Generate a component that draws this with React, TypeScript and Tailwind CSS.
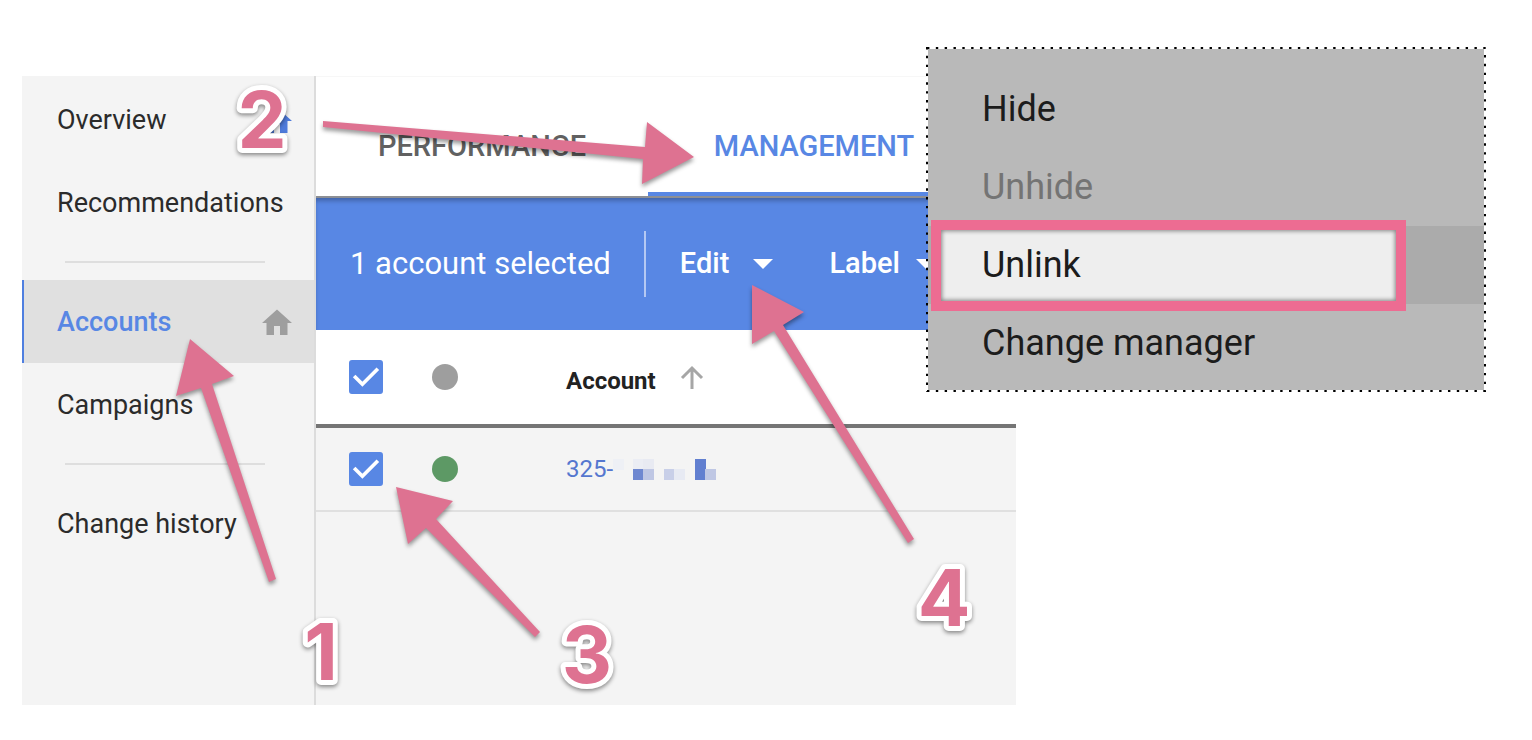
import { useState } from 'react';
import { clsx } from 'clsx';

type NavItem = { label: string; home?: string; active?: boolean };

const navGroups: NavItem[][] = [
  [{ label: 'Overview', home: 'text-[#4f7bdb]' }, { label: 'Recommendations' }],
  [{ label: 'Accounts', home: 'text-[#9e9e9e]', active: true }, { label: 'Campaigns' }],
  [{ label: 'Change history' }],
];

const menuItems = [
  { label: 'Hide' },
  { label: 'Unhide', disabled: true },
  { label: 'Unlink', highlighted: true },
  { label: 'Change manager' },
];

const arrows = [
  '190,339 234,376 212,384 276,579 269,582 201,388 176,396',
  '323,121 645,147 647,122 694,157 642,184 643,159 323,127',
  '396,487 453,501 436,519 540,632 535,637 426,528 408,544',
  '752,285 804,312 783,325 914,539 908,543 774,331 752,344',
];

const steps = [
  { label: '1', x: 321, y: 680 },
  { label: '2', x: 262, y: 148 },
  { label: '3', x: 587, y: 683 },
  { label: '4', x: 944, y: 626 },
];

// blurred digits of the account number
const redacted = [
  { x: 0, y: 0, fill: '#eef0f5' },
  { x: 20, y: 0, fill: '#ebedf4' },
  { x: 30, y: 0, fill: '#e8eaf2' },
  { x: 20, y: 10, fill: '#6f88d0' },
  { x: 30, y: 10, fill: '#bfc7e4' },
  { x: 51, y: 10, fill: '#c8cfe8' },
  { x: 61, y: 10, fill: '#e7eaf3' },
  { x: 82, y: 0, fill: '#617fd0' },
  { x: 82, y: 10, fill: '#617fd0' },
  { x: 92, y: 10, fill: '#bfc7e4' },
];

function HomeIcon({ className }: { className: string }) {
  return (
    <svg viewBox="0 0 24 24" fill="currentColor" aria-hidden="true" className={clsx('h-9 w-9', className)}>
      <path d="M10 20v-6h4v6h5v-8h3L12 3 2 12h3v8z" />
    </svg>
  );
}

function Caret() {
  return (
    <svg viewBox="0 0 20 10" fill="currentColor" aria-hidden="true" className="h-[10px] w-5">
      <path d="M0 0h20L10 10z" />
    </svg>
  );
}

function Checkbox({ label }: { label: string }) {
  const [checked, setChecked] = useState(true);

  return (
    <label className="relative ml-[33px] block h-[34px] w-[34px]">
      <input
        type="checkbox"
        aria-label={label}
        checked={checked}
        onChange={(event) => setChecked(event.target.checked)}
        className="block h-full w-full appearance-none rounded-[3px] border-2 border-[#5887e4] checked:bg-[#5887e4]"
      />
      {checked && (
        <svg viewBox="0 0 33 33" fill="none" stroke="#fff" strokeWidth="3.6" aria-hidden="true" className="pointer-events-none absolute inset-0">
          <path d="M5 15.5l8 8L28 8.5" />
        </svg>
      )}
    </label>
  );
}

function Sidebar() {
  return (
    <nav className="w-[294px] flex-shrink-0 border-r-2 border-[#dcdcdc] bg-[#f4f4f4] pt-[2px]">
      {navGroups.map((group, index) => (
        <div key={group[0].label}>
          {index > 0 && (
            <div className="flex h-9 items-center">
              <hr className="ml-[43px] w-[200px] border-t-2 border-[#dedede]" />
            </div>
          )}
          {group.map((item) => (
            <a
              key={item.label}
              href="#"
              aria-current={item.active ? 'page' : undefined}
              className={clsx(
                'flex h-[83px] items-center justify-between border-l-2 pl-[33px] pr-[19px] pt-[2px] text-[27px]',
                item.active
                  ? 'border-[#4f7fe0] bg-[#e0e0e0] font-medium text-[#5887e4]'
                  : 'border-transparent text-[#2b2b2b]',
              )}
            >
              {item.label}
              {item.home && <HomeIcon className={item.home} />}
            </a>
          ))}
        </div>
      ))}
    </nav>
  );
}

function AccountsTable() {
  return (
    <table className="w-full table-fixed text-left text-[24px]">
      <colgroup>
        <col className="w-[116px]" />
        <col className="w-[134px]" />
        <col />
      </colgroup>
      <thead>
        <tr className="h-[96px] border-b-4 border-[#757575] bg-white">
          <th className="p-0">
            <Checkbox label="Select all accounts" />
          </th>
          <th className="p-0">
            <span className="block h-[26px] w-[26px] rounded-full bg-[#9e9e9e]" />
          </th>
          <th className="p-0 font-bold text-[#222]">
            <div className="flex items-center gap-6 pt-2">
              Account
              <svg viewBox="0 0 24 24" fill="none" stroke="#a6a6a6" strokeWidth="3" aria-hidden="true" className="mb-2 h-6 w-6">
                <path d="M12 24V3M2 13L12 3l10 10" />
              </svg>
            </div>
          </th>
        </tr>
      </thead>
      <tbody>
        <tr className="h-[85px] border-b-2 border-[#e0e0e0]">
          <td className="p-0">
            <Checkbox label="Select account 325" />
          </td>
          <td className="p-0">
            <span className="block h-[26px] w-[26px] rounded-full bg-[#5d9965]" />
          </td>
          <td className="p-0">
            <a href="#" className="flex items-center text-[#5577cf]">
              325-
              <svg viewBox="0 0 103 21" aria-hidden="true" className="h-[21px] w-[103px]">
                {redacted.map((block) => (
                  <rect key={`${block.x}-${block.y}`} x={block.x} y={block.y} width="11" height="11" fill={block.fill} />
                ))}
              </svg>
            </a>
          </td>
        </tr>
      </tbody>
    </table>
  );
}

function EditMenu() {
  return (
    <div role="menu" aria-label="Edit" className="absolute left-[926px] top-[47px] w-[560px] p-[2px]">
      <svg aria-hidden="true" className="pointer-events-none absolute inset-0 h-full w-full" fill="none" stroke="#000" strokeWidth="2" strokeDasharray="2.4 6.43">
        <path d="M1 1h560M1 344h560M1 0v345M559 8v345" />
      </svg>
      <div className="relative bg-[#b9b9b9] pb-2 pt-[21px]">
        {menuItems.map((item) => (
          <div key={item.label} className={clsx('relative', item.highlighted && 'bg-[#ababab]')}>
            {item.highlighted && (
              <span className="absolute -bottom-[7px] -top-[6px] left-[3px] w-[475px] border-[10px] border-[#ed6c92] bg-[#eee] shadow-[inset_0_0_4px_1px_rgba(0,0,0,0.45)]" />
            )}
            <button
              type="button"
              role="menuitem"
              disabled={item.disabled}
              className="relative block h-[78px] w-full pl-[54px] text-left text-[36px] text-[#1c1c1c] disabled:text-[#747474]"
            >
              {item.label}
            </button>
          </div>
        ))}
      </div>
    </div>
  );
}

function Annotations() {
  return (
    <svg aria-hidden="true" className="pointer-events-none absolute left-0 top-0 h-[740px] w-[1100px]">
      <g fill="#de7291" className="drop-shadow-[0_3px_2px_rgba(0,0,0,0.4)]">
        {arrows.map((points) => (
          <polygon key={points} points={points} />
        ))}
      </g>
      <g
        fill="#de7291"
        stroke="#fff"
        strokeWidth="10"
        strokeLinejoin="round"
        paintOrder="stroke"
        textAnchor="middle"
        className="font-['Inter',sans-serif] text-[78px] font-bold drop-shadow-[0_2px_2px_rgba(0,0,0,0.45)]"
      >
        {steps.map((step) => (
          <text key={step.label} x={step.x} y={step.y}>
            {step.label}
          </text>
        ))}
      </g>
    </svg>
  );
}

export default function App() {
  return (
    <div className="relative min-h-screen bg-white pl-[22px] pr-[516px] pt-[76px] font-['Roboto',sans-serif]">
      <div className="flex min-h-[629px] bg-[#f4f4f4]">
        <Sidebar />

        <main className="min-w-0 flex-1">
          <div role="tablist" className="flex h-[120px] overflow-hidden border-t border-[#f7f7f7] bg-white text-[29px] font-medium">
            <button type="button" role="tab" aria-selected="false" className="w-[332px] flex-shrink-0 pt-5 text-[#616161]">
              PERFORMANCE
            </button>
            <button
              type="button"
              role="tab"
              aria-selected="true"
              className="w-[332px] flex-shrink-0 border-b-4 border-[#5887e4] pt-6 text-[#5887e4]"
            >
              MANAGEMENT
            </button>
          </div>

          <div className="flex h-[134px] items-center overflow-hidden whitespace-nowrap border-t-2 border-[#8d8f94] bg-[#5887e4] text-[29px] font-medium text-white shadow-[inset_0_4px_4px_-1px_rgba(0,0,0,0.25)]">
            <span className="border-r-2 border-[#b4c8f3] py-3 pl-[34px] pr-[33px] text-[31px] font-normal leading-[42px]">
              1 account selected
            </span>
            <button type="button" aria-haspopup="menu" className="ml-[34px] flex items-center gap-6">
              Edit
              <Caret />
            </button>
            <button type="button" aria-haspopup="menu" className="ml-14 flex items-center gap-4">
              Label
              <Caret />
            </button>
          </div>

          <AccountsTable />
        </main>
      </div>

      <Annotations />
      <EditMenu />
    </div>
  );
}
